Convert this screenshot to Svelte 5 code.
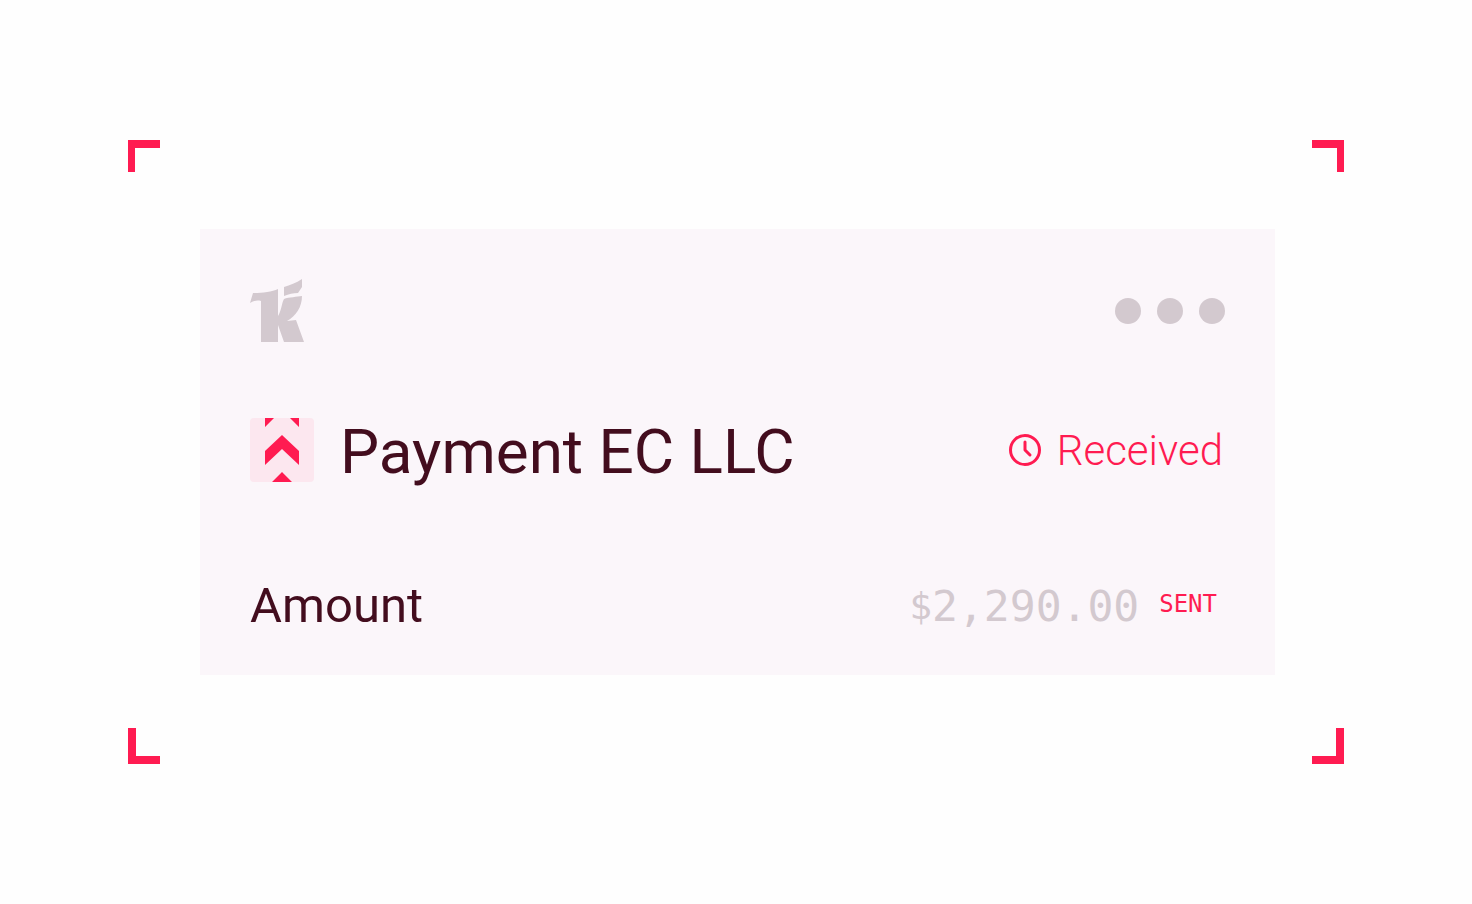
<script>
  const corners = ['top left', 'top right', 'bottom left', 'bottom right'];
  const payment = {
    title: 'Payment EC LLC',
    status: 'Received',
    currency: '$',
    amount: '2,290.00',
    step: 'SENT'
  };
</script>

<main>
  <div class="frame">
    {#each corners as corner}
      <span class="corner {corner}" aria-hidden="true"></span>
    {/each}

    <article class="card">
      <header class="row">
        <svg class="logo" viewBox="0 0 54 64" role="img" aria-label="Logo">
          <path d="M3 14 C12 14 22 13 28 10 V37 C31 33 32 23 34 20 C39 18 47 18 52 17 C52 28 46 37 37 42 L46 41 L54 63 H34 L28 46 V63 H11 V22 C7 21 3 22 0 24 Z" />
          <path d="M34 8 C40 6 46 4 52 0 V8 L48 14 C43 14 39 15 34 17 Z" />
        </svg>
        <button class="more" type="button" aria-label="More options">
          <i></i><i></i><i></i>
        </button>
      </header>

      <section class="row payment">
        <div class="name">
          <svg class="badge" viewBox="0 0 64 64" aria-hidden="true">
            <rect width="64" height="64" rx="4" />
            <path d="M15 0H24L15 9ZM49 0H40L49 9ZM32 17L49 33V47L32 31L15 47V33ZM32 54L42 64H22Z" />
          </svg>
          <h1>{payment.title}</h1>
        </div>
        <div class="status">
          <svg viewBox="0 0 32 32" aria-hidden="true">
            <circle cx="16" cy="16" r="14.5" />
            <path d="M16 8V16L21 21" stroke-linecap="round" stroke-linejoin="round" />
          </svg>
          <span>{payment.status}</span>
        </div>
      </section>

      <section class="row total">
        <h2>Amount</h2>
        <div class="value">
          <span class="currency">{payment.currency}</span>
          <span class="amount">{payment.amount}</span>
          <span class="step">{payment.step}</span>
        </div>
      </section>
    </article>
  </div>
</main>

<style>
  :global(body) {
    margin: 0;
    background: #fefefe;
  }

  main {
    box-sizing: border-box;
    min-height: 100vh;
    padding: 140px 128px;
    display: grid;
    align-items: center;
    font-family: Roboto, "Liberation Sans", sans-serif;
    color: #430d1e;
  }

  .frame {
    position: relative;
    padding: 89px 69px 89px 72px;
  }

  .corner {
    position: absolute;
    box-sizing: border-box;
    width: 32px;
    height: 32px;
    border: 0 solid #ff1b51;
  }

  .top {
    top: 0;
    border-top-width: 8px;
  }

  .bottom {
    bottom: 0;
    height: 36px;
    border-bottom-width: 8px;
  }

  .left {
    left: 0;
    border-left-width: 7px;
  }

  .right {
    right: 0;
    border-right-width: 7px;
  }

  .bottom.left {
    border-left-width: 8px;
  }

  .bottom.right {
    border-right-width: 8px;
  }

  .card {
    padding: 50px 50px 41px;
    background: #fbf6fa;
  }

  .row {
    display: flex;
    align-items: center;
    justify-content: space-between;
  }

  .logo {
    width: 54px;
    height: 64px;
    fill: #d3c9cf;
  }

  .more {
    display: flex;
    gap: 16px;
    padding: 0;
    border: 0;
    background: none;
    cursor: pointer;
  }

  .more i {
    width: 26px;
    height: 26px;
    border-radius: 50%;
    background: #d3c9cf;
  }

  .payment {
    margin-top: 75px;
  }

  .name {
    display: flex;
    align-items: center;
    gap: 26px;
  }

  .badge {
    width: 64px;
    height: 64px;
    fill: #ff1b51;
  }

  .badge rect {
    fill: #fce7ef;
  }

  h1,
  h2 {
    margin: 0;
    font-weight: 400;
  }

  h1 {
    padding-top: 4px;
    font-size: 62px;
    line-height: 60px;
  }

  h2 {
    font-size: 49px;
    line-height: 56px;
  }

  .status {
    display: flex;
    align-items: center;
    gap: 16px;
    padding-right: 2px;
    font-size: 42px;
    font-weight: 300;
    line-height: 64px;
    color: #ff1b51;
  }

  .status span {
    padding-top: 2px;
    line-height: 62px;
  }

  .status svg {
    width: 32px;
    height: 32px;
    fill: none;
    stroke: #ff1b51;
    stroke-width: 3;
  }

  .total {
    margin-top: 96px;
  }

  .value {
    display: flex;
    align-items: center;
    padding-right: 8px;
    font-family: "DejaVu Sans Mono", "Liberation Mono", monospace;
    line-height: 56px;
    color: #d3c9cf;
  }

  .currency {
    font-size: 38px;
  }

  .amount {
    font-size: 43px;
  }

  .step {
    margin-left: 20px;
    padding-bottom: 4px;
    font-size: 24px;
    line-height: 52px;
    color: #ff1b51;
  }
</style>
